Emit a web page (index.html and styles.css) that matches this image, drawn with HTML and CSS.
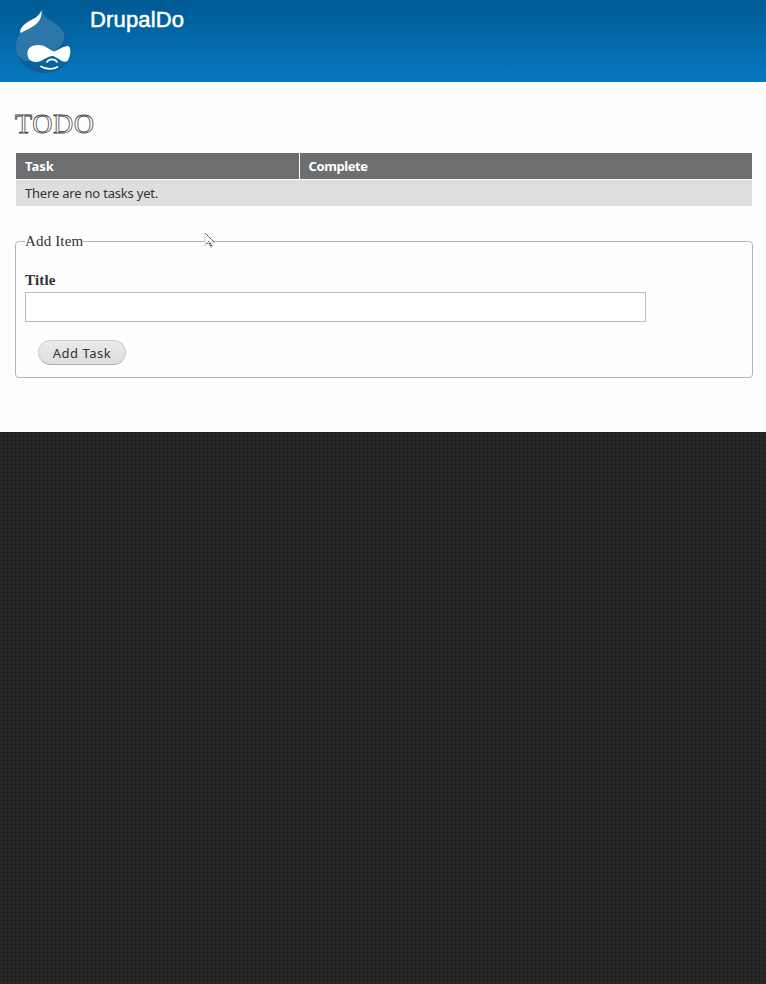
FILE: index.html
```html
<!DOCTYPE html>
<html lang="en">
<head>
<meta charset="utf-8">
<title>DrupalDo</title>
<link rel="stylesheet" href="styles.css">
</head>
<body>
<header class="header">
  <svg class="logo" width="60" height="66" viewBox="0 0 60 66" aria-hidden="true">
    <defs><clipPath id="drop"><path d="M27 1C28 8 34 11 41 15C51 21 57 30 57 40C57 54 45 64 30 64C14 64 1 53 1 37C1 27 7 21 16 15C22 11 27 8 27 1Z"/></clipPath></defs>
    <g clip-path="url(#drop)">
      <rect width="60" height="66" fill="#0863a0"/>
      <path d="M27 0C29 9 37 11 44 17C53 26 50 36 38 42C27 47 14 54 9 52C3 48 0 43 0 34C0 20 20 12 27 0Z" fill="#2c77aa"/>
      <path d="M3 46C10 66 45 69 55 48C48 58 38 61 27 59C17 58 9 54 3 46Z" fill="#085f9c"/>
    </g>
    <path d="M26.500 1C27 9 24 14 17 18C12 21 8 22 6 24C4 23 6 18 10 15C16 10 24 9 26.500 1Z" fill="#fff"/>
    <path d="M12.500 45C12 39 17 36 23 36C31 36 34 41 39 42.500C44 41 48 37 53 37C57 38 55.500 48 52.500 52C48 55 43 48.500 38 47C31 47 28 53 21 53C16 53 12.500 50 12.500 45Z" fill="#fff"/>
    <path d="M32 53C34 49.500 40 49.500 42 53M26 57.500C31 60.500 38 60.500 42.500 58" fill="none" stroke="#fff" stroke-width="1.700" stroke-linecap="round"/>
  </svg>
  <div class="site-name">DrupalDo</div>
</header>
<main class="content">
  <h1 class="heading">TODO</h1>
  <table class="tasks">
    <thead><tr><th class="task-col">Task</th><th class="complete-col">Complete</th></tr></thead>
    <tbody><tr><td colspan="2">There are no tasks yet.</td></tr></tbody>
  </table>
  <form class="add-item">
    <div class="legend"><span>Add Item</span></div>
    <label class="label" for="title">Title</label>
    <input class="title-input" id="title" type="text">
    <button class="button" type="button">Add Task</button>
  </form>
  <svg class="cursor" width="12" height="18" viewBox="0 0 12 18" aria-hidden="true">
    <path d="M1 1V14L4 11L6 16L8.500 15L6.500 10.500H11Z" fill="#fff" stroke="#ccc" stroke-width=".8"/>
    <path d="M1.500 1.500L10 10M2.500 12L4.500 9.500L7 15M6 11L8 14" fill="none" stroke="#333" stroke-width="1" stroke-dasharray="1.500 .7"/>
  </svg>
</main>
</body>
</html>
```
FILE: styles.css
```css
* { box-sizing: border-box; }
body {
  margin: 0;
  min-height: 984px;
  display: flex;
  flex-direction: column;
  color: #333;
  background: #272727 radial-gradient(circle at 3.5px .5px, #080808 0 .7px, transparent .9px) 0 0 / 4px 4px;
  font: 13px/20px "Noto Sans", "Open Sans", sans-serif;
}
.header {
  height: 82px;
  display: flex;
  align-items: flex-start;
  padding: 9px 15px;
  background: linear-gradient(#005a94, #0779bf);
}
.logo { display: block; }
.site-name {
  margin: -2px 0 0 15px;
  color: #fff;
  font: 22px/26px "Liberation Sans", Arial, sans-serif;
  letter-spacing: .15px;
  -webkit-text-stroke: .5px #fff;
}
.content {
  position: relative;
  height: 350px;
  padding: 25px 13px 0 15px;
  background: #fefefe;
}
.heading {
  margin: 0 0 12px;
  font: 28px/34px "Liberation Serif", serif;
  letter-spacing: .6px;
  color: #fff;
  -webkit-text-stroke: .8px #444;
}
.tasks {
  width: 736px;
  margin-left: 1px;
  border-collapse: collapse;
  table-layout: fixed;
}
.tasks th {
  height: 26px;
  padding: 1px 9px 0;
  text-align: left;
  line-height: 18px;
  color: #fff;
  background: #6c6e70;
}
.tasks .complete-col {
  border-left: 1px solid #fff;
  letter-spacing: -.4px;
}
.tasks td {
  height: 27px;
  padding: 0 9px;
  border-top: 1px solid #fff;
  background: #dddfdf;
  letter-spacing: -.2px;
}
.task-col { width: 283px; }
.add-item {
  height: 137px;
  margin-top: 35px;
  padding: 0 9px;
  border: 1px solid #b5b5b5;
  border-radius: 4px;
  display: flex;
  flex-direction: column;
  align-items: flex-start;
}
.legend, .label { font-family: "Liberation Serif", serif; font-size: 15px; }
.legend { margin-top: -11px; height: 20px; }
.legend span { display: block; background: #fefefe; letter-spacing: .15px; }
.label { margin-top: 20px; font-weight: bold; line-height: 18px; letter-spacing: .2px; }
.title-input {
  width: 621px;
  height: 30px;
  margin-top: 3px;
  border: 1px solid #bcbcbc;
  background: #fff;
}
.button {
  width: 88px;
  height: 25px;
  margin: 18px 0 0 13px;
  padding: 0;
  color: #333;
  border: 1px solid #ccc;
  border-bottom-color: #aaa;
  border-radius: 13px;
  background: linear-gradient(#eaeaea, #dedede);
  font: 13px/22px "Noto Sans", sans-serif;
  letter-spacing: .55px;
}
.cursor { position: absolute; left: 204px; top: 150px; }
```
